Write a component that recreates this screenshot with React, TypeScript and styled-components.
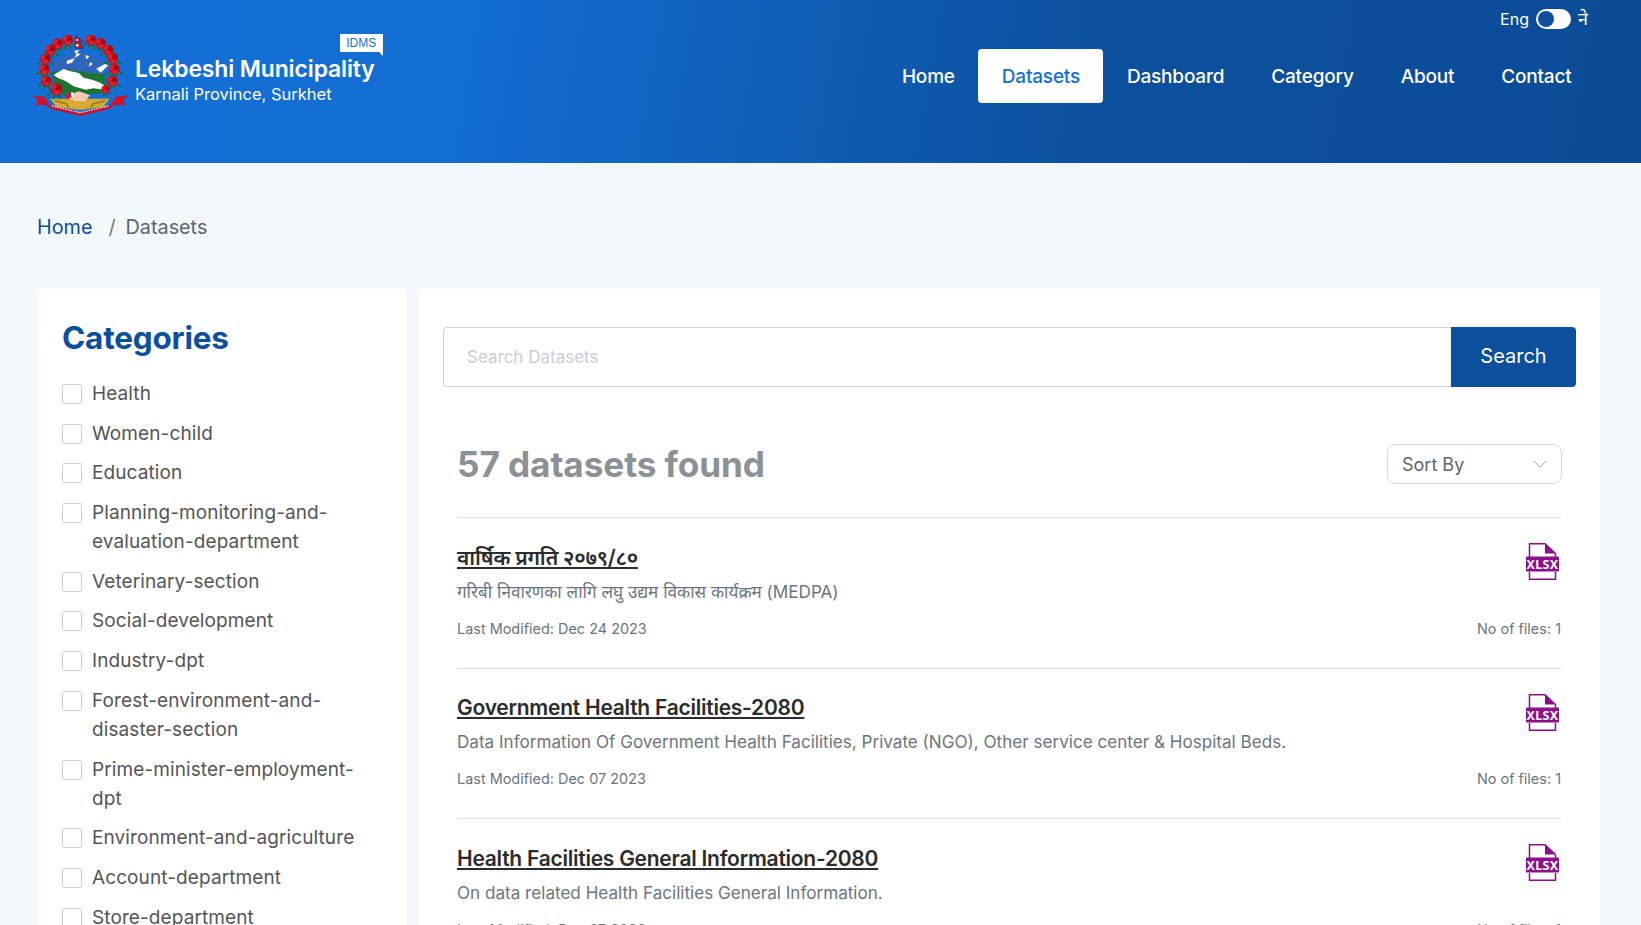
import React from 'react';
import styled, { createGlobalStyle } from 'styled-components';

const font = `"Inter", "Noto Sans", "Noto Sans Devanagari", "Lohit Devanagari", sans-serif`;

const GlobalStyle = createGlobalStyle`
  html, body {
    margin: 0;
    height: 100%;
    overflow: hidden;
    background: #f3f8fd;
    font-family: ${font};
  }
  * { box-sizing: border-box; }
`;

const Page = styled.div`
  height: 925px;
  overflow: hidden;
`;

const Header = styled.header`
  height: 163px;
  background: linear-gradient(100deg, #1370d8 0%, #136dd2 28%, #0c4f9c 68%, #0b4c97 100%);
  display: flex;
  justify-content: space-between;
  padding: 0 46px 0 31px;
`;

const Brand = styled.div`
  display: flex;
  align-items: flex-start;
  padding-top: 35px;
`;

const BrandText = styled.div`
  position: relative;
  margin-left: 5px;
  padding-top: 21px;
  color: #fff;
`;

const BrandName = styled.div`
  font-size: 22.9px;
  line-height: 27px;
  font-weight: 600;
  letter-spacing: -0.1px;
  white-space: nowrap;
`;

const BrandSub = styled.div`
  font-size: 16.5px;
  line-height: 22px;
  font-weight: 400;
  white-space: nowrap;
`;

const Badge = styled.span`
  position: absolute;
  right: -8px;
  top: -1px;
  width: 43px;
  height: 18px;
  background: #fff;
  color: #1370d8;
  font-family: "Liberation Sans", sans-serif;
  font-size: 12px;
  line-height: 18px;
  text-align: center;

  &::after {
    content: '';
    position: absolute;
    right: 0;
    bottom: -4px;
    border-top: 4px solid #fff;
    border-left: 4px solid transparent;
  }
`;

const HeaderRight = styled.div`
  display: flex;
  flex-direction: column;
  align-items: flex-end;
`;

const LangRow = styled.div`
  display: flex;
  align-items: center;
  gap: 7px;
  height: 20px;
  margin: 9px 7px 0 0;
  color: #fff;
  font-size: 16px;
`;

const LangNe = styled.span`
  font-size: 18px;
  line-height: 20px;
  margin-top: -1px;
`;

const Toggle = styled.span`
  position: relative;
  width: 35px;
  height: 20px;
  border-radius: 10px;
  background: #fff;

  &::after {
    content: '';
    position: absolute;
    left: 2px;
    top: 2px;
    width: 16px;
    height: 16px;
    border-radius: 50%;
    background: #0c4f9c;
  }
`;

const Nav = styled.nav`
  display: flex;
  align-items: center;
  margin-top: 20px;
`;

const NavItem = styled.a<{ $active?: boolean }>`
  height: 54px;
  padding: 0 23.5px;
  display: flex;
  align-items: center;
  border-radius: 4px;
  font-size: 19px;
  font-weight: 500;
  letter-spacing: -0.2px;
  color: ${(p) => (p.$active ? '#1370d8' : '#fff')};
  background: ${(p) => (p.$active ? '#fff' : 'transparent')};
`;

const Crumbs = styled.div`
  display: flex;
  align-items: center;
  height: 128px;
  padding: 0 0 0 37px;
  margin-bottom: -2px;
  font-size: 19.8px;
  color: #5c6670;
`;

const CrumbLink = styled.a`
  color: #0c4f9c;
`;

const CrumbSep = styled.span`
  margin: 0 10px 0 16px;
  color: #777;
`;

const Columns = styled.div`
  display: grid;
  grid-template-columns: 369px 1181px;
  gap: 13px;
  padding-left: 37px;
`;

const Sidebar = styled.aside`
  background: #fff;
  padding: 29px 25px 0 25px;
`;

const SideTitle = styled.h2`
  margin: 0 0 21px;
  font-size: 31.5px;
  line-height: 40px;
  font-weight: 700;
  color: #0c4f9c;
  letter-spacing: -0.2px;
`;

const CheckRow = styled.label`
  display: flex;
  align-items: flex-start;
  gap: 10px;
  margin-bottom: 10.7px;
  font-size: 19px;
  line-height: 29px;
  letter-spacing: 0.1px;
  color: #555;
`;

const CheckLabel = styled.span`
  max-width: 270px;
`;

const CheckBox = styled.span`
  flex: none;
  width: 20px;
  height: 20px;
  margin-top: 5px;
  border: 1px solid #cfcfcf;
  border-radius: 2px;
  background: #fff;
`;

const Main = styled.main`
  background: #fff;
  padding: 38px 24px 0;
`;

const SearchBar = styled.div`
  display: flex;
  height: 60px;
`;

const SearchInput = styled.div`
  flex: 1;
  display: flex;
  align-items: center;
  padding-left: 23px;
  border: 1px solid #ced4da;
  border-right: 0;
  border-radius: 4px 0 0 4px;
  font-size: 17px;
  color: #c9ced6;
`;

const SearchButton = styled.button`
  width: 125px;
  padding: 0 0 3px;
  border: 0;
  border-radius: 0 4px 4px 0;
  background: #0c4f9c;
  color: #fff;
  font-family: inherit;
  font-size: 20px;
`;

const Results = styled.div`
  padding: 0 15px 0 14px;
`;

const ResultsHead = styled.div`
  display: flex;
  align-items: center;
  justify-content: space-between;
  height: 131px;
  padding: 40px 0 16px;
  border-bottom: 1px solid #dedede;
`;

const Count = styled.h1`
  margin: 0;
  font-size: 35.2px;
  font-weight: 700;
  color: #8d9094;
  letter-spacing: -0.1px;
`;

const SortBox = styled.div`
  width: 175px;
  height: 40px;
  margin-right: -1px;
  border: 1px solid #d6d6d6;
  border-radius: 8px;
  display: flex;
  align-items: center;
  justify-content: space-between;
  padding: 0 14px;
  font-size: 18px;
  color: #5c6670;
`;

const Item = styled.article`
  height: 150.5px;
  padding-top: 24.5px;
  border-bottom: 1px solid #dedede;
`;

const ItemTop = styled.div`
  display: flex;
  justify-content: space-between;
  align-items: flex-start;
  height: 32px;
`;

const ItemTitle = styled.a`
  font-size: 21px;
  line-height: 30px;
  font-weight: 600;
  color: #2b2b2b;
  text-decoration: underline;
  letter-spacing: -0.25px;
`;

const FileIcon = styled.svg`
  flex: none;
  margin: 0.5px 2px 0 0;
`;

const ItemDesc = styled.p`
  margin: 2px 0 0;
  font-size: 17.1px;
  line-height: 30px;
  color: #6c757d;
`;

const ItemMeta = styled.div`
  display: flex;
  justify-content: space-between;
  margin-top: 11px;
  font-size: 14.45px;
  line-height: 22px;
  color: #6c757d;
`;

const Rose = ({ x, y, r = 1.15 }: { x: number; y: number; r?: number }) => (
  <g transform={`translate(${x} ${y}) scale(${r})`}>
    <path d="M-14 6l-12 8 11 1zM14 6l12 8-11 1zM-7 12l-3 12 10-9zM7 12l3 12-10-9z" fill="#1b6b2c" />
    <circle r="14" fill="#c80f1c" />
    <circle cx="-6" cy="-4" r="6" fill="#e2222a" />
    <circle cx="6" cy="-4" r="6" fill="#a60a16" />
    <circle cx="0" cy="6" r="6" fill="#e2222a" />
    <circle r="3" fill="#8f0712" />
  </g>
);

const roses: [number, number, number?][] = [
  [139, 60], [109, 71], [87, 90], [72, 117], [69, 148], [75, 183], [105, 208, 1.3],
  [209, 60], [238, 70], [261, 90], [274, 115], [279, 147], [273, 183], [252, 208, 0.9],
];

const Emblem = () => (
  <svg width="99" height="83" viewBox="30 45 294 249">
    <path d="M88 128l52-24 24-16 20 6 16 10 30 12 32 22-14 22-140 6z" fill="#2f66bb" />
    <path d="M158 92l16-2-8 10 12 2-18 12 4-12zM192 104l12 6-10 8zM136 122l24-8-8 14-16 4zM206 126l8 6-12 8zM224 146l26-14 10 4-22 22z" fill="#fff" />
    <path d="M92 156l50-8 60 10 46 4 6 38-20 22H120l-24-30z" fill="#1d7332" />
    <path d="M96 165l30-18 18 6 28 6 14 14 26 6 20 8 20 10-6 12-30-4-24 4-36-10-24-16-24-10z" fill="#fff" />
    <path d="M86 236h178l-18 24-70 10-72-10z" fill="#d6aa2e" />
    <path d="M100 242l36 10 6 10M250 242l-36 10-6 10" fill="none" stroke="#9c7a1a" strokeWidth="5" />
    <path d="M144 224l28-10 34 12-16 18h-26l-20-8z" fill="#f4c8b4" />
    <path d="M130 226l18-8 3 14-18 6z" fill="#d8182a" />
    <path d="M148 218l6-2 3 14-6 2z" fill="#fff" />
    <path d="M34 228l36 2 14 26 92 22 92-22 14-26 38-4-16 16 8 14-30-2-22 14-84 20-84-20-22-14-30 2 10-14z" fill="#cf1027" />
    <path d="M92 258l84 20 84-20" fill="none" stroke="#f3d7d7" strokeWidth="4" strokeDasharray="5 3" />
    {roses.map(([x, y, r]) => (
      <Rose key={`${x}-${y}`} x={x} y={y} r={r} />
    ))}
    <path d="M162 47l24 18h-12l12 20h-24z" fill="#d01128" stroke="#1c3f94" strokeWidth="3" />
    <circle cx="167" cy="60" r="3" fill="#fff" />
    <circle cx="167" cy="76" r="4" fill="#fff" />
  </svg>
);

const XlsxIcon = () => (
  <FileIcon width="33" height="37" viewBox="0 0 33 37">
    <path d="M3.5 14V.75H19L29.5 10.5V14M3.5 29v7.25h26V29" fill="none" stroke="#8b0f8b" strokeWidth="1.5" />
    <path d="M19 .75l10.5 9.75H19z" fill="#8b0f8b" />
    <rect x="0" y="13.5" width="33" height="15" rx="1" fill="#8b0f8b" />
    <text x="16.5" y="25.5" textAnchor="middle" fontFamily="Noto Sans, sans-serif" fontSize="12.5" fontWeight="700" letterSpacing="0.4" fill="#fff">XLSX</text>
  </FileIcon>
);

const categories = [
  'Health', 'Women-child', 'Education', 'Planning-monitoring-and-evaluation-department',
  'Veterinary-section', 'Social-development', 'Industry-dpt', 'Forest-environment-and-disaster-section',
  'Prime-minister-employment-dpt', 'Environment-and-agriculture', 'Account-department', 'Store-department',
];

const datasets = [
  { title: 'वार्षिक प्रगति २०७९/८०', desc: 'गरिबी निवारणका लागि लघु उद्यम विकास कार्यक्रम (MEDPA)', date: 'Dec 24 2023' },
  { title: 'Government Health Facilities-2080', desc: 'Data Information Of Government Health Facilities, Private (NGO), Other service center & Hospital Beds.', date: 'Dec 07 2023' },
  { title: 'Health Facilities General Information-2080', desc: 'On data related Health Facilities General Information.', date: 'Dec 07 2023' },
];

const navLinks = ['Home', 'Datasets', 'Dashboard', 'Category', 'About', 'Contact'];

export default function App() {
  return (
    <Page>
      <GlobalStyle />
      <Header>
        <Brand>
          <Emblem />
          <BrandText>
            <Badge>IDMS</Badge>
            <BrandName>Lekbeshi Municipality</BrandName>
            <BrandSub>Karnali Province, Surkhet</BrandSub>
          </BrandText>
        </Brand>
        <HeaderRight>
          <LangRow>
            <span>Eng</span>
            <Toggle />
            <LangNe>ने</LangNe>
          </LangRow>
          <Nav>
            {navLinks.map((l) => (
              <NavItem key={l} $active={l === 'Datasets'}>{l}</NavItem>
            ))}
          </Nav>
        </HeaderRight>
      </Header>
      <Crumbs>
        <CrumbLink>Home</CrumbLink>
        <CrumbSep>/</CrumbSep>
        <span>Datasets</span>
      </Crumbs>
      <Columns>
        <Sidebar>
          <SideTitle>Categories</SideTitle>
          {categories.map((c) => (
            <CheckRow key={c}>
              <CheckBox />
              <CheckLabel>{c}</CheckLabel>
            </CheckRow>
          ))}
        </Sidebar>
        <Main>
          <SearchBar>
            <SearchInput>Search Datasets</SearchInput>
            <SearchButton>Search</SearchButton>
          </SearchBar>
          <Results>
            <ResultsHead>
              <Count>57 datasets found</Count>
              <SortBox>
                <span>Sort By</span>
                <svg width="14" height="8" viewBox="0 0 14 8">
                  <path d="M1 1l6 6 6-6" fill="none" stroke="#a8a8a8" strokeWidth="1" />
                </svg>
              </SortBox>
            </ResultsHead>
            {datasets.map((d) => (
              <Item key={d.title}>
                <ItemTop>
                  <ItemTitle>{d.title}</ItemTitle>
                  <XlsxIcon />
                </ItemTop>
                <ItemDesc>{d.desc}</ItemDesc>
                <ItemMeta>
                  <span>Last Modified: {d.date}</span>
                  <span>No of files: 1</span>
                </ItemMeta>
              </Item>
            ))}
          </Results>
        </Main>
      </Columns>
    </Page>
  );
}
